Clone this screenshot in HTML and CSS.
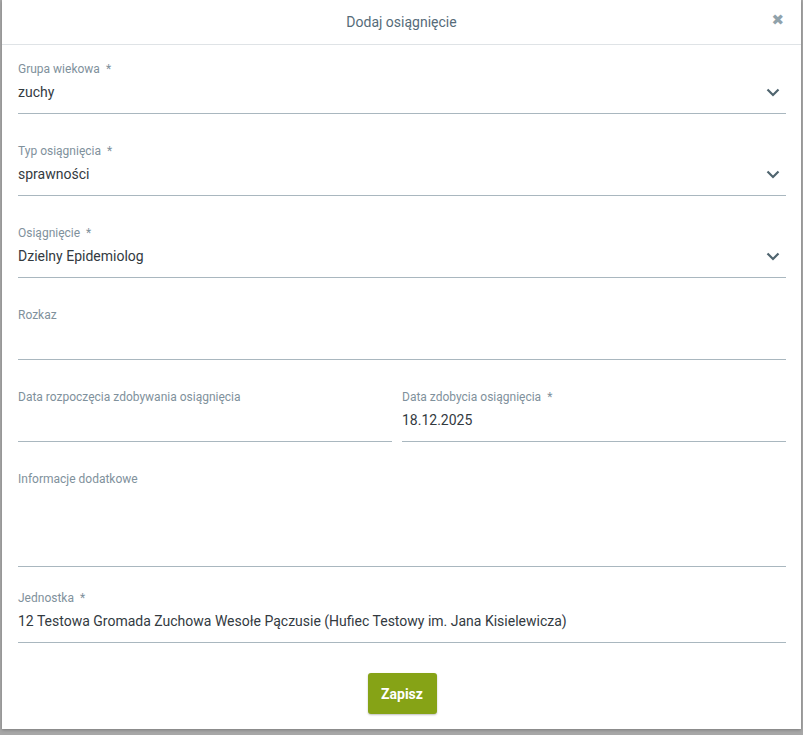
FILE: index.html
```html
<!DOCTYPE html>
<html lang="pl">
<head>
<meta charset="utf-8">
<title>Dodaj osiągnięcie</title>
<link rel="stylesheet" href="styles.css">
</head>
<body>
<div class="modal">
  <div class="modal-header">
    <span class="modal-title">Dodaj osiągnięcie</span>
    <span class="close">&#10006;</span>
  </div>
  <div class="modal-body">
    <div class="field">
      <div class="label">Grupa wiekowa<span class="req">*</span></div>
      <div class="value select">zuchy<svg class="chev" viewBox="0 0 14 9" width="14" height="9"><path d="M1.5 1.5 L7 7 L12.5 1.5" fill="none" stroke="#50656f" stroke-width="2.2"/></svg></div>
    </div>
    <div class="field">
      <div class="label">Typ osiągnięcia<span class="req">*</span></div>
      <div class="value select">sprawności<svg class="chev" viewBox="0 0 14 9" width="14" height="9"><path d="M1.5 1.5 L7 7 L12.5 1.5" fill="none" stroke="#50656f" stroke-width="2.2"/></svg></div>
    </div>
    <div class="field">
      <div class="label">Osiągnięcie<span class="req">*</span></div>
      <div class="value select">Dzielny Epidemiolog<svg class="chev" viewBox="0 0 14 9" width="14" height="9"><path d="M1.5 1.5 L7 7 L12.5 1.5" fill="none" stroke="#50656f" stroke-width="2.2"/></svg></div>
    </div>
    <div class="field">
      <div class="label">Rozkaz</div>
      <div class="value"></div>
    </div>
    <div class="row">
      <div class="field left">
        <div class="label">Data rozpoczęcia zdobywania osiągnięcia</div>
        <div class="value"></div>
      </div>
      <div class="field">
        <div class="label">Data zdobycia osiągnięcia<span class="req">*</span></div>
        <div class="value">18.12.2025</div>
      </div>
    </div>
    <div class="field textarea">
      <div class="label">Informacje dodatkowe</div>
      <div class="value"></div>
    </div>
    <div class="field">
      <div class="label">Jednostka<span class="req">*</span></div>
      <div class="value">12 Testowa Gromada Zuchowa Wesołe Pączusie (Hufiec Testowy im. Jana Kisielewicza)</div>
    </div>
    <div class="actions">
      <button class="btn">Zapisz</button>
    </div>
  </div>
</div>
</body>
</html>
```
FILE: styles.css
```css
html, body {
  margin: 0;
  padding: 0;
}
body {
  background: #a7a7a7;
  font-family: Roboto, "Liberation Sans", Arial, sans-serif;
  width: 803px;
  height: 735px;
  overflow: hidden;
}
.modal {
  margin-left: 2px;
  width: 799px;
  height: 729px;
  background: #fff;
  box-shadow: 0 1px 3px rgba(0,0,0,0.25);
  box-sizing: border-box;
}
.modal-header {
  height: 44px;
  border-bottom: 1px solid #dfe3e6;
  position: relative;
  display: flex;
  align-items: center;
  justify-content: center;
}
.modal-title {
  font-size: 14px;
  color: #566b79;
}
.close {
  position: absolute;
  right: 17px;
  top: 13px;
  font-size: 15px;
  line-height: 14px;
  color: #90a2ab;
  font-family: "DejaVu Sans", sans-serif;
  font-weight: bold;
}
.modal-body {
  padding: 16px 15px 0 16px;
}
.field {
  border-bottom: 1px solid #a9b7bf;
  margin-bottom: 29px;
  padding-bottom: 10px;
}
.label {
  font-size: 12px;
  line-height: 16px;
  color: #7f919c;
  height: 16px;
  margin-bottom: 4px;
}
.req {
  margin-left: 6px;
}
.value {
  font-size: 14px;
  line-height: 22px;
  height: 22px;
  color: #333a3f;
  white-space: nowrap;
}
.select {
  display: flex;
  justify-content: space-between;
  align-items: center;
}
.chev {
  margin-right: 6px;
}
.row {
  display: grid;
  grid-template-columns: 1fr 1fr;
}
.row .left {
  margin-right: 10px;
}
.textarea {
  margin-bottom: 23px;
}
.textarea .value {
  height: 65px;
}
.actions {
  display: flex;
  justify-content: center;
  margin-top: 30px;
}
.btn {
  width: 69px;
  height: 41px;
  border: none;
  border-radius: 3px;
  background: #86a316;
  color: #fff;
  font-family: Roboto, "Liberation Sans", Arial, sans-serif;
  font-weight: bold;
  font-size: 14px;
  box-shadow: 0 1px 2px rgba(0,0,0,0.25);
  padding: 0;
}
```
